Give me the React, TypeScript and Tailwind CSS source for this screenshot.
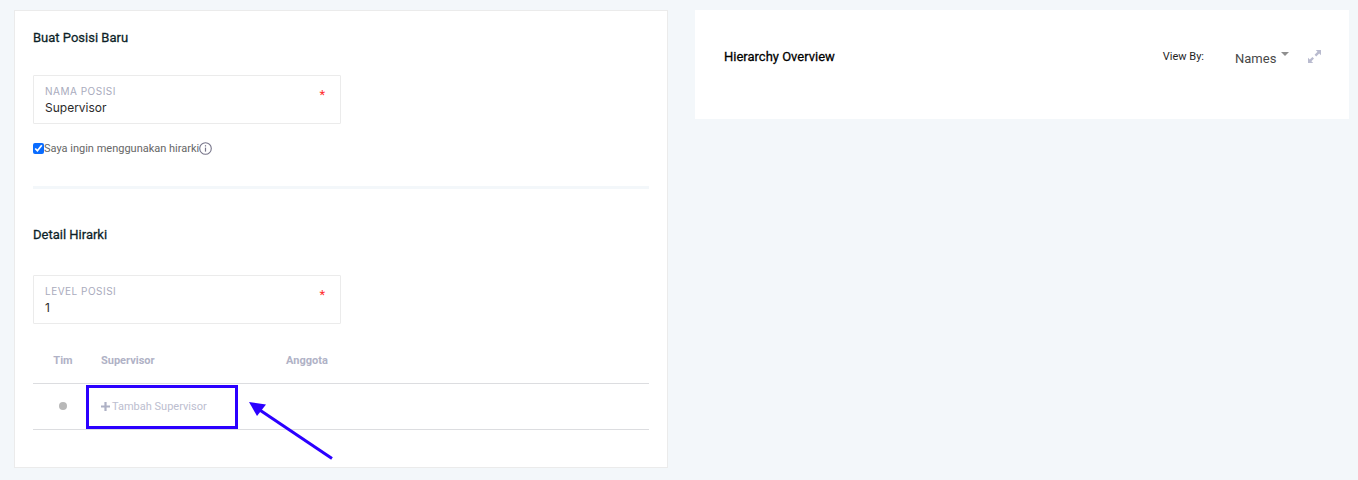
import { useState } from 'react';

interface FieldProps {
  id: string;
  label: string;
  value: string;
  onChange: (value: string) => void;
}

function Field({ id, label, value, onChange }: FieldProps) {
  return (
    <div className="w-[308px] max-w-full h-[49px] flex justify-between border border-[#ebebeb] rounded-[1px] pl-[11px] pr-[15px] pt-2.5">
      <div className="flex-1 flex flex-col">
        <label htmlFor={id} className="font-['Inter'] text-[10px] leading-[10px] tracking-wider uppercase text-[#a9abbd]">
          {label}
        </label>
        <input
          id={id}
          type="text"
          required
          value={value}
          onChange={(e) => onChange(e.target.value)}
          className="w-full h-6 p-0 font-['Inter',sans-serif] text-[12px] leading-6 text-[#2b2b2b] outline-none"
        />
      </div>
      <span className="text-[13px] leading-[18px] text-[#ff2d2d]">*</span>
    </div>
  );
}

function InfoIcon() {
  return (
    <svg className="w-[13px] h-[13px]" viewBox="0 0 13 13" fill="none" stroke="#77758a">
      <circle cx="6.5" cy="6.5" r="5.8" strokeWidth="1.1" />
      <path d="M6.5 5.6v4" strokeWidth="1.2" />
      <path d="M6.5 3.2v1.3" strokeWidth="1.2" />
    </svg>
  );
}

function PlusIcon() {
  return (
    <svg className="w-[9px] h-[9px]" viewBox="0 0 9 9" fill="#aeb1c5">
      <path d="M3.4 0h2.2v3.4H9v2.2H5.6V9H3.4V5.6H0V3.4h3.4z" />
    </svg>
  );
}

function ExpandIcon() {
  return (
    <svg className="w-[13px] h-[13px]" viewBox="0 0 13 13" fill="#b9bbcf">
      <path d="M7.8 0H13v5.2L11.2 3.5 8.2 6.4 6.6 4.8 9.5 1.8z" />
      <path d="M5.2 13H0V7.8l1.8 1.7 2.6-2.6L6 8.5l-2.6 2.7z" />
    </svg>
  );
}

export default function App() {
  const [name, setName] = useState('Supervisor');
  const [level, setLevel] = useState('1');
  const [useHierarchy, setUseHierarchy] = useState(true);
  const [viewBy, setViewBy] = useState('names');

  return (
    <main className="min-h-screen bg-[#f3f7fa] pl-3.5 pr-[9px] py-2.5 grid grid-cols-2 gap-[27px] items-start font-['Roboto',sans-serif]">
      <section className="bg-white border border-[#ebebeb] px-[18px] pt-[17px] pb-[37px]">
        <h2 className="text-[13px] leading-5 font-normal [-webkit-text-stroke:thin] text-[#0c1f28]">Buat Posisi Baru</h2>

        <div className="mt-[27px]">
          <Field id="position-name" label="Nama Posisi" value={name} onChange={setName} />
        </div>

        <div className="mt-4 flex items-center h-4">
          <input
            id="use-hierarchy"
            type="checkbox"
            checked={useHierarchy}
            onChange={(e) => setUseHierarchy(e.target.checked)}
            className="w-[11px] h-[11px] m-0 accent-[#0a6cff]"
          />
          <label htmlFor="use-hierarchy" className="pt-0.5 text-[11px] leading-4 text-[#666666]">
            Saya ingin menggunakan hirarki
          </label>
          <InfoIcon />
        </div>

        <hr className="mt-[30px] border-0 h-[3px] bg-[#f3f7fa]" />

        <h2 className="mt-9 text-[13px] leading-5 font-normal [-webkit-text-stroke:thin] text-[#0c1f28]">Detail Hirarki</h2>

        <div className="mt-[30px]">
          <Field id="position-level" label="Level Posisi" value={level} onChange={setLevel} />
        </div>

        <table className="mt-3.5 w-full table-fixed border-collapse text-[11px] text-left">
          <thead>
            <tr className="h-[45px] border-b border-[#dcdde0] text-[#b0b2c6]">
              <th className="w-[60px] p-0 pt-0.5 text-center font-bold">Tim</th>
              <th className="w-[185px] p-0 pt-0.5 pl-2 font-bold">Supervisor</th>
              <th className="p-0 pt-0.5 pl-2 font-bold">Anggota</th>
            </tr>
          </thead>
          <tbody>
            <tr className="h-[46px] border-b border-[#dcdde0]">
              <td className="p-0">
                <div className="mx-auto w-2 h-2 rounded-full bg-[#b8b8b8]" />
              </td>
              <td className="relative p-0 pl-2">
                <button type="button" className="flex items-center gap-0.5 text-[#bcbecf]">
                  <PlusIcon />
                  <span className="pt-0.5">Tambah Supervisor</span>
                </button>
                {/* Highlight box and pointer over the add button */}
                <div className="absolute -left-[7px] top-[1px] w-[152px] h-11 border-3 border-[#2b00ff] pointer-events-none" />
                <svg className="absolute left-[156px] top-[18px] w-[84px] h-[58px] pointer-events-none" viewBox="0 0 84 58">
                  <path d="M10 7.5L83 56.5" stroke="#2b00ff" strokeWidth="3" />
                  <path d="M0 0L17 2.5L8 14z" fill="#2b00ff" />
                </svg>
              </td>
              <td className="p-0 pl-2" />
            </tr>
          </tbody>
        </table>
      </section>

      <section className="bg-white h-[109px] pl-[29px] pr-7 flex items-start justify-between pt-[37px]">
        <h2 className="text-[13px] leading-5 font-normal [-webkit-text-stroke:thin] text-black">Hierarchy Overview</h2>
        <div className="flex items-start">
          <label htmlFor="view-by" className="text-[11px] leading-5 text-[#1f1f1f]">
            View By:
          </label>
          <div className="ml-[31px] relative">
            <select
              id="view-by"
              value={viewBy}
              onChange={(e) => setViewBy(e.target.value)}
              className="block appearance-none w-[54px] h-6 p-0 text-[13px] leading-6 text-[#484848] bg-transparent outline-none"
            >
              <option value="names">Names</option>
            </select>
            <svg className="absolute right-0 top-[5px] w-2 h-1 pointer-events-none" viewBox="0 0 8 4" fill="#8f8f8f">
              <path d="M0 0h8L4 4z" />
            </svg>
          </div>
          <button type="button" aria-label="Expand" className="ml-[19px] mt-[3px]">
            <ExpandIcon />
          </button>
        </div>
      </section>
    </main>
  );
}
